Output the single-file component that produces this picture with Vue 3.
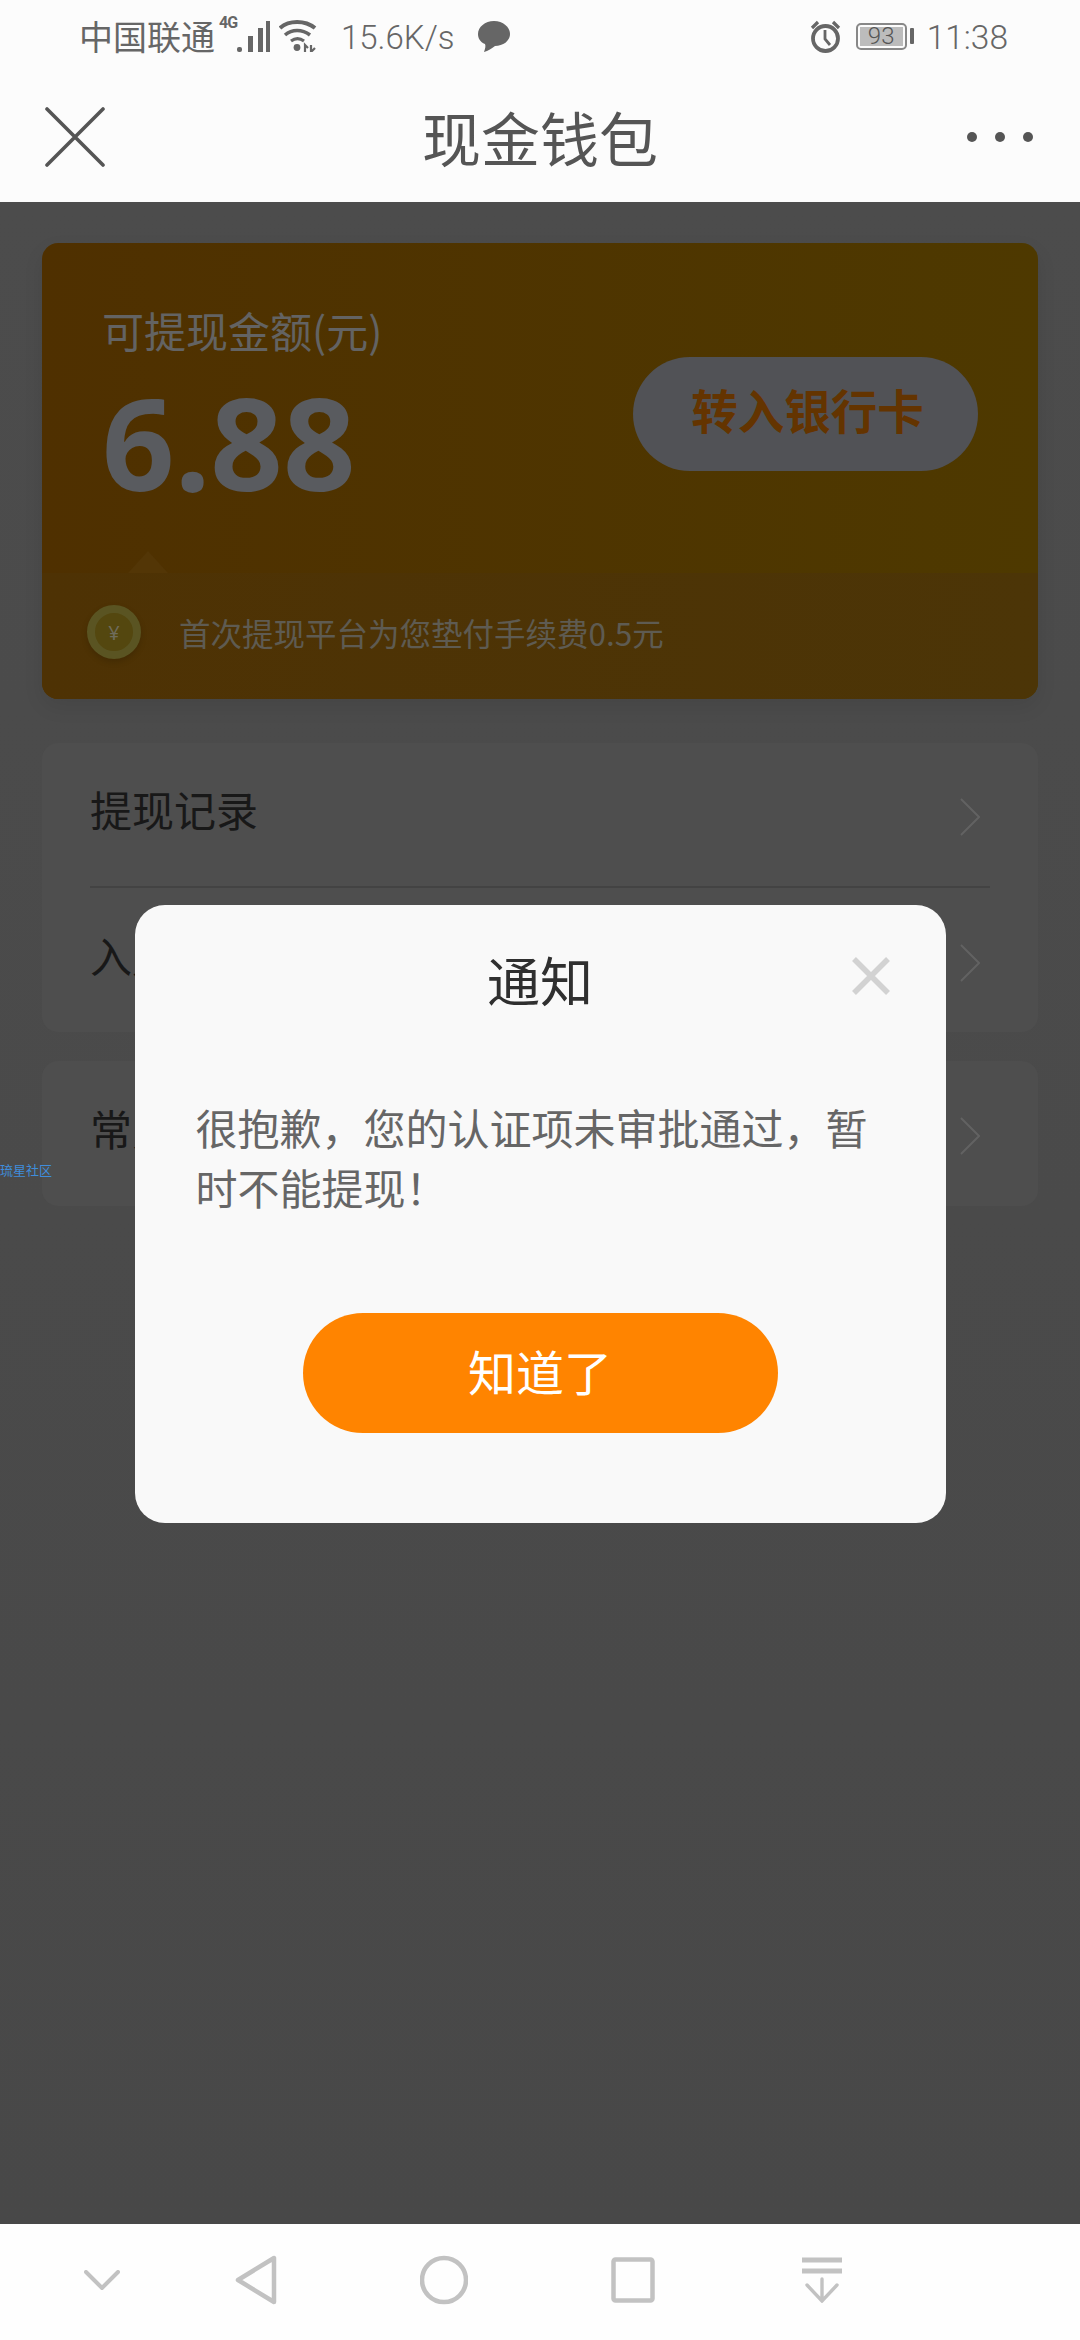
<script setup>
const rows = [
  { title: '提现记录' },
  { title: '入账记录' }
]
</script>

<template>
  <div class="phone">
    <div class="status">
      <div class="status-left">
        <span class="carrier">中国联通</span>
        <span class="net">4G</span>
        <svg class="signal" width="33" height="31" viewBox="0 0 33 31">
          <rect x="0" y="26" width="5" height="5" rx="2" fill="#666" />
          <rect x="11" y="15" width="5" height="16" fill="#666" />
          <rect x="21" y="7" width="5" height="24" fill="#666" />
          <rect x="29" y="0" width="4" height="31" fill="#666" />
        </svg>
        <svg class="wifi" width="38" height="32" viewBox="0 0 38 32">
          <path d="M1 8 C10 0 26 0 36 8" fill="none" stroke="#666" stroke-width="4" />
          <path d="M6 15 C13 9 23 9 31 15" fill="none" stroke="#666" stroke-width="3.6" />
          <path d="M12 21 C16 18 21 18 25 21" fill="none" stroke="#666" stroke-width="3.2" />
          <circle cx="18" cy="27.5" r="3.4" fill="#666" />
          <path d="M26 32V25l3 3M32 25v7l4-4" fill="none" stroke="#666" stroke-width="2.2" />
        </svg>
        <span class="speed">15.6K/s</span>
        <svg class="bubble" width="33" height="31" viewBox="0 0 33 31">
          <path d="M17 0C26 0 33 6 33 13C33 20 26 25 18 25C15 27 11 30 7 31C8 28 9 25 8 23C3 21 1 17 1 13C1 6 8 0 17 0Z" fill="#666" />
        </svg>
      </div>
      <div class="status-right">
        <svg class="alarm" width="31" height="33" viewBox="0 0 31 33">
          <circle cx="15.5" cy="18.5" r="12.5" fill="none" stroke="#666" stroke-width="3.8" />
          <path d="M15 10v9l5 6" fill="none" stroke="#666" stroke-width="2.8" />
          <path d="M2 8L8 2M29 8L23 2" fill="none" stroke="#666" stroke-width="3.2" />
        </svg>
        <div class="battery"><span class="battery-fill">93</span></div>
        <span class="battery-cap"></span>
        <span class="clock">11:38</span>
      </div>
    </div>

    <div class="nav">
      <svg class="nav-close" width="60" height="60" viewBox="0 0 60 60">
        <path d="M2 2L58 58M58 2L2 58" fill="none" stroke="#555" stroke-width="3.6" stroke-linecap="round" />
      </svg>
      <h1 class="nav-title">现金钱包</h1>
      <div class="nav-more"><i></i><i></i><i></i></div>
    </div>

    <main class="content">
      <section class="wallet">
        <div class="wallet-top">
          <div>
            <p class="wallet-label">可提现金额(元)</p>
            <p class="wallet-amount">6.88</p>
          </div>
          <button class="wallet-btn">转入银行卡</button>
        </div>
        <div class="wallet-tip">
          <span class="tip-arrow"></span>
          <span class="coin">¥</span>
          <span class="tip-text">首次提现平台为您垫付手续费0.5元</span>
        </div>
      </section>

      <section class="list">
        <div class="row" v-for="row in rows" :key="row.title">
          <span>{{ row.title }}</span>
          <svg width="20" height="38" viewBox="0 0 20 38">
            <path d="M1 1L19 19L1 37" fill="none" stroke="#626262" stroke-width="2" />
          </svg>
        </div>
      </section>

      <section class="list">
        <div class="row">
          <span>常见问题</span>
          <svg width="20" height="38" viewBox="0 0 20 38">
            <path d="M1 1L19 19L1 37" fill="none" stroke="#626262" stroke-width="2" />
          </svg>
        </div>
      </section>

      <span class="watermark">琉星社区</span>

      <div class="mask">
        <div class="dialog">
          <svg class="dialog-close" width="38" height="38" viewBox="0 0 38 38">
            <path d="M2 2L36 36M36 2L2 36" fill="none" stroke="#d2d2d2" stroke-width="5.5" />
          </svg>
          <h2 class="dialog-title">通知</h2>
          <p class="dialog-text">很抱歉，您的认证项未审批通过，暂时不能提现！</p>
          <button class="dialog-btn">知道了</button>
        </div>
      </div>
    </main>

    <div class="sysnav">
      <svg class="sys-down" width="36" height="20" viewBox="0 0 36 20">
        <path d="M2 2L18 18L34 2" fill="none" stroke="#c2c2c2" stroke-width="4" stroke-linecap="round" />
      </svg>
      <svg width="42" height="50" viewBox="0 0 42 50">
        <path d="M39 3V47L3 25Z" fill="none" stroke="#c2c2c2" stroke-width="4.5" stroke-linejoin="round" />
      </svg>
      <svg width="48" height="50" viewBox="0 0 48 50">
        <circle cx="24" cy="25" r="22" fill="none" stroke="#c2c2c2" stroke-width="4.5" />
      </svg>
      <svg width="44" height="46" viewBox="0 0 44 46">
        <rect x="2.5" y="2.5" width="39" height="41" rx="2" fill="none" stroke="#c2c2c2" stroke-width="4.5" />
      </svg>
      <svg class="sys-drop" width="40" height="46" viewBox="0 0 40 46">
        <path d="M0 3H40M0 14H40" fill="none" stroke="#c2c2c2" stroke-width="5" />
        <path d="M20 22V44M5 28L20 44L35 28" fill="none" stroke="#c2c2c2" stroke-width="3.4" stroke-linecap="round" />
      </svg>
    </div>
  </div>
</template>

<style scoped>
* {
  margin: 0;
  padding: 0;
  box-sizing: border-box;
}
.phone {
  display: flex;
  flex-direction: column;
  width: 1080px;
  height: 2340px;
  overflow: hidden;
  font-family: "Noto Sans CJK SC", "Noto Sans", sans-serif;
  background: #fcfcfc;
}

.status {
  display: flex;
  justify-content: space-between;
  align-items: center;
  height: 72px;
  padding: 0 72px 0 79px;
  color: #666;
  flex-shrink: 0;
}
.status-left,
.status-right {
  display: flex;
  align-items: center;
}
.carrier {
  font-size: 34px;
  line-height: 36px;
}
.net {
  align-self: flex-start;
  margin: -2px 0 0 4px;
  width: 18px;
  font-family: "Roboto", sans-serif;
  font-weight: 700;
  font-size: 16px;
  letter-spacing: -1px;
  line-height: 18px;
}
.wifi {
  margin-left: 9px;
}
.speed {
  margin: 4px 0 0 24px;
  font-family: "Roboto", sans-serif;
  font-weight: 300;
  font-size: 33px;
  line-height: 36px;
}
.bubble {
  margin-left: 22px;
}
.battery {
  display: flex;
  margin-left: 15px;
  width: 51px;
  height: 27px;
  padding: 2px;
  border: 2px solid #888;
  border-radius: 5px;
}
.battery-fill {
  flex: 1;
  text-align: center;
  background: #bcbcbc;
  font-family: "Roboto", sans-serif;
  font-size: 24px;
  font-weight: 300;
  line-height: 19px;
  color: #555;
}
.battery-cap {
  margin-left: 3px;
  width: 4px;
  height: 16px;
  background: #666;
  border-radius: 1px;
}
.clock {
  margin: 4px 0 0 13px;
  font-family: "Roboto", sans-serif;
  font-weight: 300;
  font-size: 33.5px;
  line-height: 36px;
}

.nav {
  display: grid;
  grid-template-columns: 1fr auto 1fr;
  align-items: center;
  height: 130px;
  padding: 0 47px;
  flex-shrink: 0;
}
.nav-close {
  width: 60px;
  height: 60px;
  margin-left: -2px;
}
.nav-title {
  font-size: 59px;
  font-weight: 400;
  line-height: 70px;
  color: #555;
}
.nav-more {
  display: flex;
  justify-self: end;
  gap: 18px;
}
.nav-more i {
  width: 10px;
  height: 10px;
  border-radius: 50%;
  background: #555;
}

.content {
  position: relative;
  flex: 1;
  padding: 41px 42px 0;
  background: linear-gradient(#4c4c4c, #484848);
}
.wallet {
  height: 456px;
  background: linear-gradient(90deg, #4f3000, #4e3900);
  border-radius: 16px;
  overflow: hidden;
  box-shadow: 0 8px 20px rgba(0, 0, 0, 0.08);
}
.wallet-top {
  display: flex;
  justify-content: space-between;
  align-items: flex-start;
  height: 330px;
  padding: 61px 60px 0;
}
.wallet-label {
  font-size: 42px;
  line-height: 52px;
  color: #636363;
}
.wallet-amount {
  margin-top: 12px;
  font-family: "Noto Sans", sans-serif;
  font-size: 127px;
  font-weight: 700;
  line-height: 148px;
  color: #595b5f;
}
.wallet-btn {
  width: 345px;
  height: 114px;
  margin-top: 53px;
  padding: 0 0 12px 4px;
  border: none;
  border-radius: 57px;
  background: #515256;
  font-family: inherit;
  font-size: 46.5px;
  font-weight: 700;
  color: #643400;
}
.wallet-tip {
  position: relative;
  display: flex;
  align-items: center;
  height: 126px;
  padding: 0 0 8px 45px;
  background: linear-gradient(90deg, #4e3204, #4c3507);
}
.tip-arrow {
  position: absolute;
  left: 86px;
  top: -22px;
  width: 40px;
  height: 22px;
  background: #533606;
  clip-path: polygon(50% 0, 100% 100%, 0 100%);
}
.coin {
  display: flex;
  justify-content: center;
  align-items: center;
  width: 54px;
  height: 54px;
  border: 8px solid #5a5422;
  border-radius: 50%;
  background: #54470f;
  box-shadow: 0 3px 6px rgba(0, 0, 0, 0.15);
  font-family: "Noto Sans", sans-serif;
  font-size: 20px;
  color: #6f6c5c;
}
.tip-text {
  margin-left: 38px;
  font-size: 31.5px;
  line-height: 40px;
  color: #5e5b52;
}

.list {
  margin-top: 29px;
  padding: 0 48px;
  background: #4e4e4e;
  border-radius: 16px;
}
.list:nth-of-type(2) {
  margin-top: 44px;
}
.row {
  display: flex;
  justify-content: space-between;
  align-items: center;
  height: 145px;
  font-size: 42px;
  color: #181818;
}
.list:nth-of-type(2) .row:first-child {
  height: 143px;
}
.row span {
  margin-bottom: 12px;
}
.row + .row {
  height: 146px;
  border-top: 2px solid #434343;
}
.row svg {
  margin: 5px 10px 0 0;
}

.watermark {
  position: absolute;
  left: 0;
  top: 960px;
  font-size: 13px;
  line-height: 16px;
  color: #3f8ddb;
}

.mask {
  position: absolute;
  inset: 0;
  display: flex;
  justify-content: center;
  align-items: center;
  padding-top: 2px;
}
.dialog {
  position: relative;
  width: 811px;
  height: 618px;
  padding-left: 61px;
  background: #f9f9f9;
  border-radius: 30px;
}
.dialog-close {
  position: absolute;
  right: 56px;
  top: 52px;
}
.dialog-title {
  margin-left: -61px;
  text-align: center;
  font-size: 53px;
  font-weight: 400;
  line-height: 148px;
  color: #2f2f2f;
}
.dialog-text {
  width: 680px;
  margin-top: 44px;
  font-size: 42px;
  line-height: 60px;
  color: #666;
}
.dialog-btn {
  display: block;
  width: 475px;
  height: 120px;
  margin: 96px 0 0 107px;
  padding-bottom: 6px;
  border: none;
  border-radius: 60px;
  background: #ff8400;
  font-family: inherit;
  font-size: 48px;
  color: #fff;
}

.sysnav {
  display: flex;
  align-items: center;
  gap: 143px;
  height: 116px;
  padding: 0 0 4px 84px;
  background: #fefefe;
  flex-shrink: 0;
}
.sys-down {
  margin-right: -28px;
}
.sys-drop {
  margin-left: 4px;
}
</style>
